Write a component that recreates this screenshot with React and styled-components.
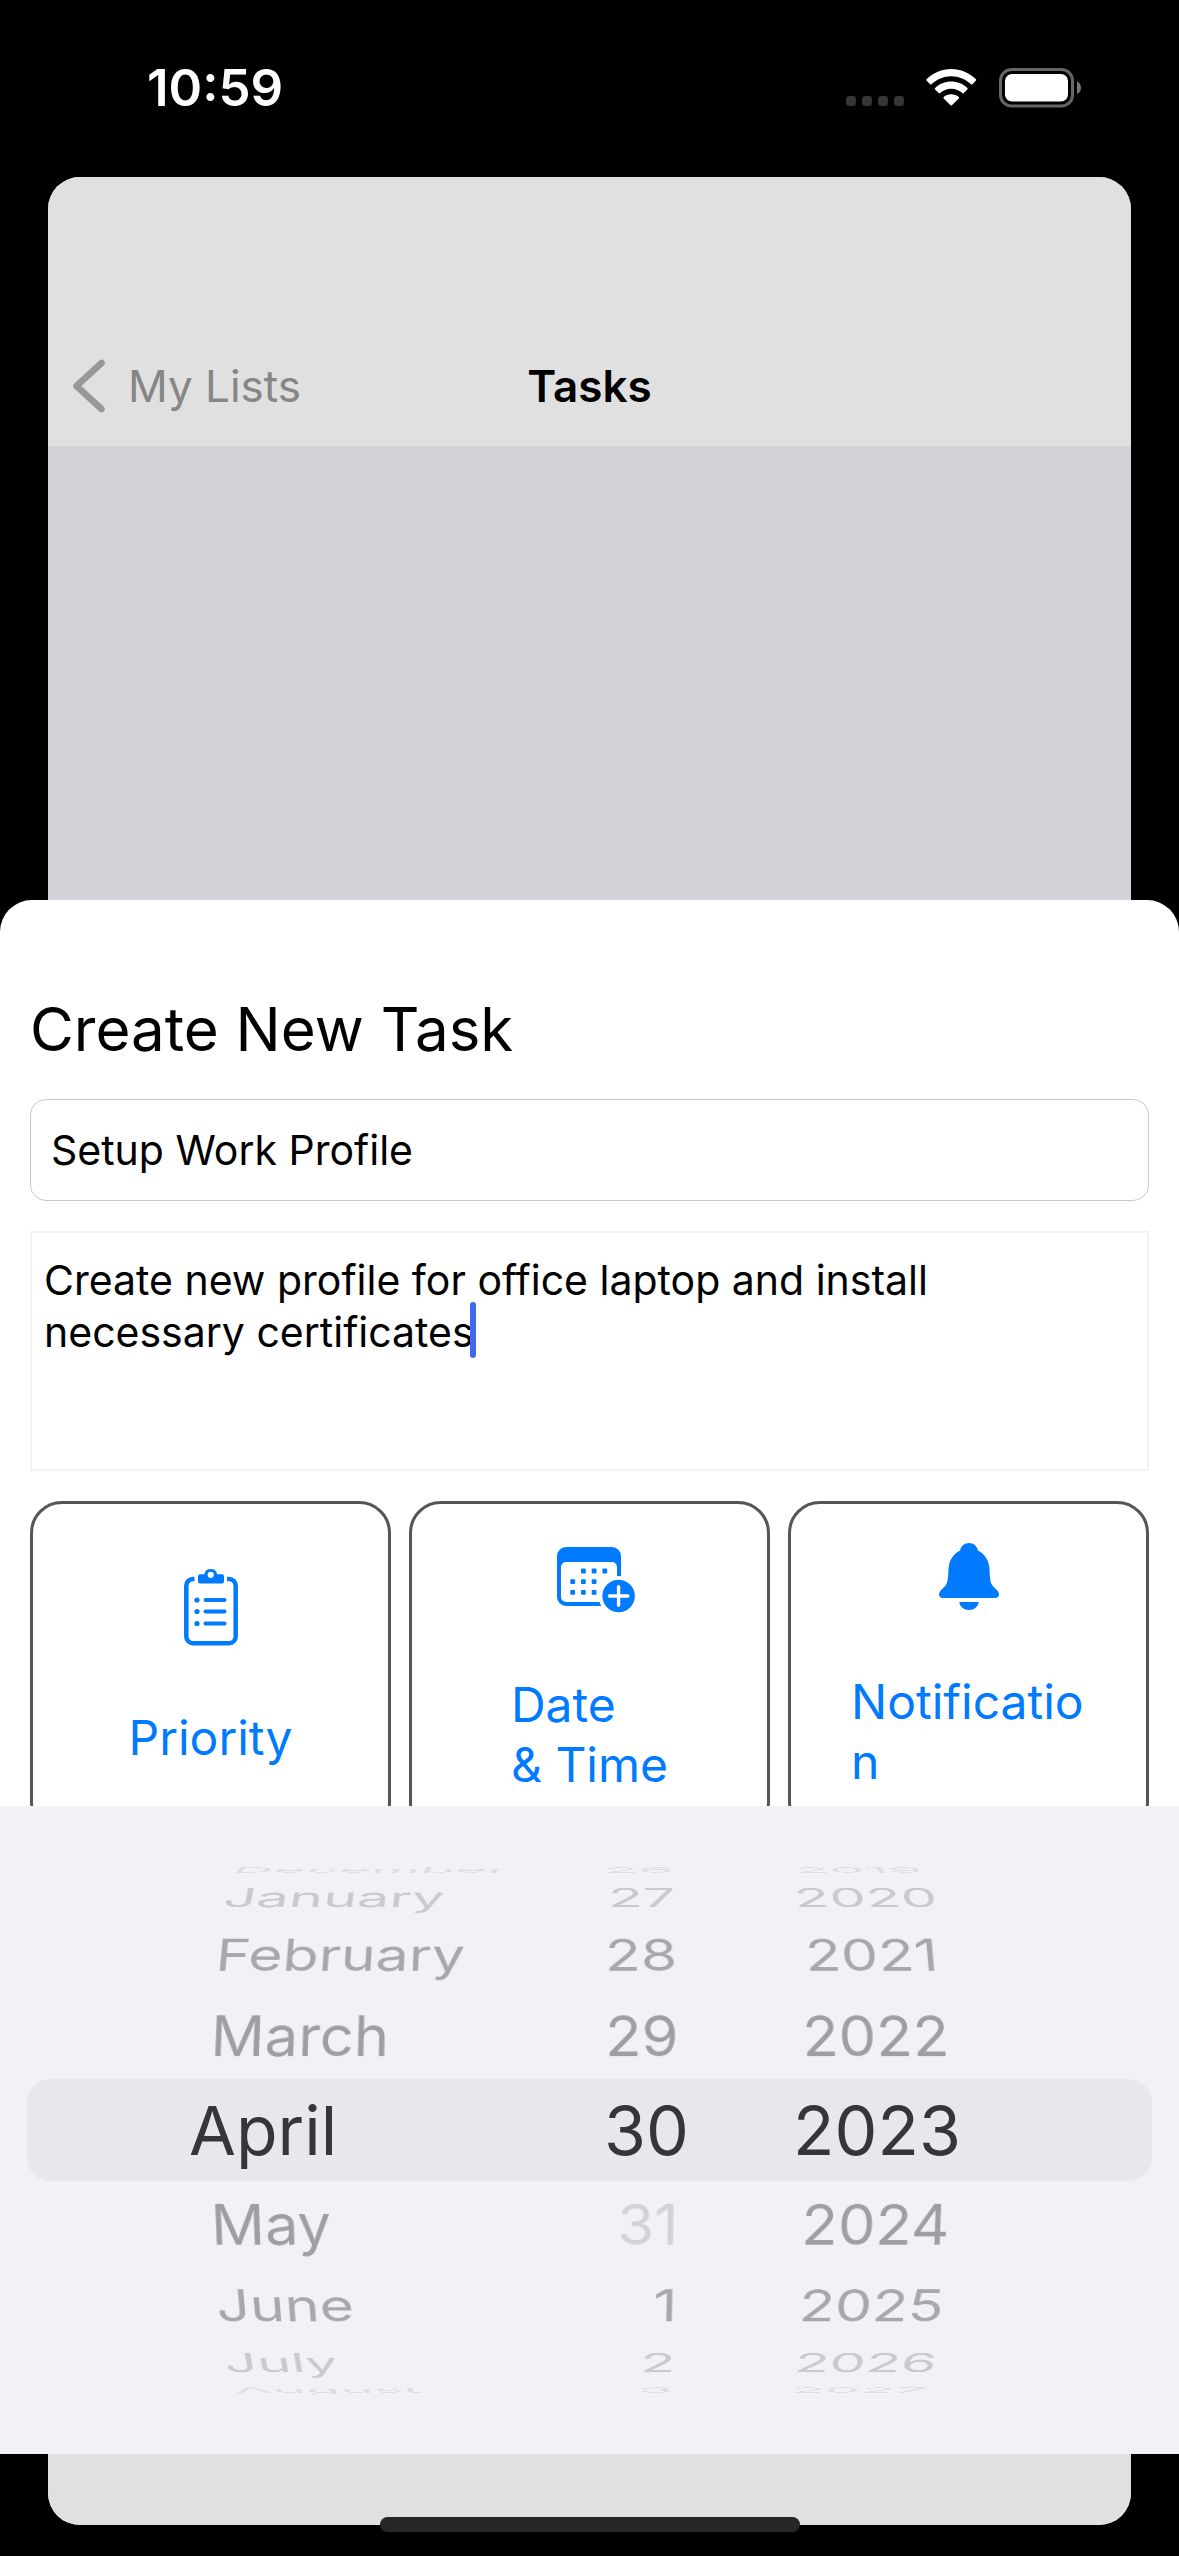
import React, { useState } from "react";
import styled, { createGlobalStyle } from "styled-components";

const GlobalStyle = createGlobalStyle`
  *, *::before, *::after { box-sizing: border-box; }
  body {
    margin: 0;
    background: #000;
    font-family: Inter, "Liberation Sans", sans-serif;
    color: #000;
  }
  button, input, textarea { font: inherit; color: inherit; margin: 0; }
`;

const BLUE = "#007aff";
const WHEEL_RADIUS = 284;
const WHEEL_STEP = 19.5;

const Screen = styled.div`
  position: relative;
  display: flex;
  flex-direction: column;
  min-height: 100vh;
  overflow: hidden;
`;

const StatusBar = styled.header`
  display: flex;
  align-items: center;
  justify-content: space-between;
  height: 177px;
  padding: 0 98px 2px 147px;
  color: #fff;
`;

const Clock = styled.time`
  font-size: 51px;
  font-weight: 600;
  line-height: 60px;
`;

const StatusIcons = styled.div`
  display: flex;
  align-items: center;
  gap: 22px;
`;

const Stage = styled.div`
  flex: 1;
  display: grid;
`;

const BackCard = styled.section`
  grid-area: 1 / 1;
  display: flex;
  flex-direction: column;
  margin: 0 48px 31px;
  border-radius: 32px;
  background: #d4d3d9;
  overflow: hidden;
`;

const NavBar = styled.nav`
  display: grid;
  grid-template-columns: 1fr auto 1fr;
  align-items: center;
  height: 269px;
  padding: 148px 24px 0;
  background: #e0e0e0;
`;

const BackLink = styled.a`
  display: flex;
  align-items: center;
  gap: 22px;
  color: #868686;
  font-size: 44px;
  line-height: 56px;
  text-decoration: none;
`;

const NavTitle = styled.h1`
  margin: 0;
  font-size: 44px;
  font-weight: 600;
  line-height: 56px;
`;

const TabBar = styled.div`
  height: 120px;
  margin-top: auto;
  background: #e0e0e0;
`;

const Overlay = styled.main`
  grid-area: 1 / 1;
  display: flex;
  flex-direction: column;
  margin: 723px 0 102px;
`;

const Sheet = styled.form`
  flex: 1;
  display: flex;
  flex-direction: column;
  gap: 30px;
  padding: 89px 30px 0;
  border-radius: 32px 32px 0 0;
  background: #fff;
`;

const SheetTitle = styled.h2`
  margin: 0;
  font-size: 60px;
  font-weight: 400;
  line-height: 80px;
`;

const TitleInput = styled.input`
  width: 100%;
  height: 102px;
  padding: 0 20px;
  border: 1px solid #c9c9cb;
  border-radius: 16px;
  background: #fff;
  font-size: 41px;
  outline: none;
`;

const NotesField = styled.div`
  position: relative;
  display: flex;
`;

const Notes = styled.textarea`
  width: 100%;
  height: 240px;
  padding: 21px 40px 21px 12px;
  border: 2px solid #f2f2f5;
  background: #fff;
  font-size: 41px;
  line-height: 52px;
  resize: none;
  outline: none;
  caret-color: #4169f0;
`;

const Caret = styled.span`
  position: absolute;
  left: 440px;
  top: 71px;
  width: 6px;
  height: 56px;
  border-radius: 3px;
  background: #4169f0;
`;

const Options = styled.div`
  display: grid;
  grid-template-columns: repeat(3, 1fr);
  gap: 18px;
  height: 305px;
  overflow: hidden;
`;

const OptionCard = styled.button`
  display: flex;
  flex-direction: column;
  align-items: center;
  justify-content: center;
  gap: 62px;
  height: 333px;
  padding: 0 60px;
  border: 3px solid #555;
  border-radius: 32px;
  background: #fff;
  color: ${BLUE};
  font-size: 48px;
  line-height: 60px;
`;

const OptionLabel = styled.span`
  max-width: 100%;
  text-align: left;
  white-space: pre-line;
  overflow-wrap: anywhere;
`;

const Picker = styled.section`
  display: grid;
  align-items: center;
  height: 648px;
  padding: 0 27px;
  background: #f2f1f7;
`;

const SelectionBand = styled.div`
  grid-area: 1 / 1;
  height: 102px;
  border-radius: 24px;
  background: #e8e7ec;
`;

const Drum = styled.div`
  grid-area: 1 / 1;
  display: grid;
  grid-template-columns: 500fr 162fr 376fr 87fr;
  perspective: 3300px;
`;

const Wheel = styled.ul`
  display: grid;
  margin: 0;
  padding: 0;
  list-style: none;
  transform-style: preserve-3d;
`;

const shade = ["#363638", "#9f9fa1", "#a8a8ab", "#cacace", "#dedee2"];

const WheelItem = styled.li`
  grid-area: 1 / 1;
  display: flex;
  justify-content: ${(p) => p.$align};
  align-items: center;
  height: 102px;
  padding-left: ${(p) => (p.$align !== "flex-start" ? 0 : p.$offset === 0 ? 162 : 182)}px;
  padding-right: ${(p) => (p.$align !== "flex-end" || p.$offset === 0 ? 0 : 10)}px;
  font-size: ${(p) => (p.$offset === 0 ? 68 : 60)}px;
  color: ${(p) => (p.$muted ? "#d3d3d5" : shade[Math.abs(p.$offset)])};
  transform: translateZ(-${WHEEL_RADIUS}px) rotateX(${(p) => -p.$offset * WHEEL_STEP}deg)
    translateZ(${WHEEL_RADIUS}px);
`;

const HomeIndicator = styled.div`
  position: absolute;
  bottom: 24px;
  left: 50%;
  width: 420px;
  height: 15px;
  margin-left: -210px;
  border-radius: 8px;
  background: #262626;
`;

const SignalDots = () => (
  <svg width="58" height="38" viewBox="0 0 58 38" fill="#363636" aria-hidden="true">
    {[0, 16, 32, 48].map((x) => (
      <rect key={x} x={x} y="27" width="10" height="10" rx="3.5" />
    ))}
  </svg>
);

const WifiIcon = () => (
  <svg width="51" height="37" viewBox="0 0 51 37" fill="#fff" aria-hidden="true">
    <path d="M.5 10.2C7 3.8 15.8 0 25.2 0S43.5 3.8 50 10.2c.4.4.4 1 0 1.4l-3.6 3.7c-.4.4-1 .4-1.4 0C39.8 10.3 32.8 7.3 25.2 7.3S10.7 10.3 5.5 15.3c-.4.4-1 .4-1.4 0L.5 11.6c-.4-.4-.4-1 0-1.4z" />
    <path d="M9.1 19C13.3 15 19 12.6 25.2 12.6S37.2 15 41.4 19c.4.4.4 1 0 1.4l-3.7 3.7c-.4.4-1 .4-1.4 0-2.9-2.7-6.8-4.3-11.1-4.3s-8.2 1.6-11.1 4.3c-.4.4-1 .4-1.4 0L9.1 20.4c-.4-.4-.4-1 0-1.4z" />
    <path d="M17.7 28c2-1.7 4.6-2.7 7.5-2.7s5.6 1 7.6 2.7c.4.4.5 1 0 1.4l-6.9 6.9c-.4.4-1 .4-1.4 0l-6.8-6.9c-.4-.4-.4-1 0-1.4z" />
  </svg>
);

const BatteryIcon = () => (
  <svg width="82" height="40" viewBox="0 0 82 40" aria-hidden="true">
    <rect x="1.5" y="1.5" width="72" height="36.5" rx="11" fill="none" stroke="#666" strokeWidth="3" />
    <rect x="6" y="6" width="63" height="27.5" rx="7" fill="#fff" />
    <path d="M78 13.5c2.6 1 4 3.5 4 6.2s-1.4 5.2-4 6.2z" fill="#777" />
  </svg>
);

const BackChevron = () => (
  <svg width="34" height="54" viewBox="0 0 34 54" fill="none" aria-hidden="true">
    <path d="M29.5 4 4.5 27l25 23" stroke="#989898" strokeWidth="6.5" strokeLinecap="round" strokeLinejoin="round" />
  </svg>
);

const ClipboardIcon = () => (
  <svg width="54" height="78" viewBox="0 0 54 78" fill={BLUE} aria-hidden="true">
    <path
      d="M10.5 11H9a6.7 6.7 0 0 0-6.7 6.7v50.8A6.7 6.7 0 0 0 9 75.2h36a6.7 6.7 0 0 0 6.7-6.7V17.7A6.7 6.7 0 0 0 45 11h-2"
      fill="none"
      stroke={BLUE}
      strokeWidth="4.5"
    />
    <path
      fillRule="evenodd"
      d="M16 6.3h4.3a6.5 6.5 0 0 1 12.8 0H38a2 2 0 0 1 2 2v5.2a2 2 0 0 1-2 2H16a2 2 0 0 1-2-2V8.3a2 2 0 0 1 2-2zM26.7 3.7a3.1 3.1 0 1 0 0 6.2 3.1 3.1 0 0 0 0-6.2z"
    />
    {[32, 43.5, 55.5].map((y) => (
      <g key={y}>
        <circle cx="13" cy={y} r="2.6" />
        <rect x="19.5" y={y - 2} width="23" height="4" rx="2" />
      </g>
    ))}
  </svg>
);

const calendarDots = [
  [26.4, 24], [37.1, 24], [47.8, 24],
  [15.7, 34.7], [26.4, 34.7], [37.1, 34.7],
  [15.7, 45.4], [26.4, 45.4], [37.1, 45.4],
];

const CalendarIcon = () => (
  <svg width="90" height="72" viewBox="-12 -6 90 72" fill={BLUE} aria-hidden="true">
    <path
      fillRule="evenodd"
      d="M9 0h46a9 9 0 0 1 9 9v41a9 9 0 0 1-9 9H9a9 9 0 0 1-9-9V9a9 9 0 0 1 9-9zM9 15a5 5 0 0 0-5 5v30a5 5 0 0 0 5 5h46a5 5 0 0 0 5-5V20a5 5 0 0 0-5-5z"
    />
    <circle cx="61.6" cy="49" r="20" fill="#fff" />
    {calendarDots.map(([x, y]) => (
      <rect key={`${x}-${y}`} x={x - 2.4} y={y - 2.4} width="4.8" height="4.8" rx="1" />
    ))}
    <circle cx="61.6" cy="49" r="16.2" />
    <path d="M61.6 39.8v18.4M52.4 49h18.4" stroke="#fff" strokeWidth="3.4" strokeLinecap="round" />
  </svg>
);

const BellIcon = () => (
  <svg width="60" height="67" viewBox="0 0 60 67" fill={BLUE} aria-hidden="true">
    <path d="M30 0c4.6 0 8 3 9 7.5 7 3.5 11 10 11.500 18.500.3 7 .5 11.500 2 15 1.500 3.500 7.500 6 7.500 10.800 0 2-1.500 3.200-3.800 3.200H3.800C1.500 55 0 53.800 0 51.800 0 47 6 44.500 7.500 41c1.500-3.500 1.700-8 2-15C10 17.500 14 11 21 7.500 22 3 25.400 0 30 0z" />
    <path d="M20.3 59h19.4c-.4 4.6-4.7 8-9.7 8s-9.3-3.4-9.7-8z" />
  </svg>
);

const options = [
  { label: "Priority", Icon: ClipboardIcon },
  { label: "Date\n& Time", Icon: CalendarIcon },
  { label: "Notification", Icon: BellIcon },
];

const wheels = [
  {
    name: "Month",
    align: "flex-start",
    values: ["December", "January", "February", "March", "April", "May", "June", "July", "August"],
  },
  {
    name: "Day",
    align: "flex-end",
    values: ["26", "27", "28", "29", "30", "31", "1", "2", "3"],
    unavailable: "31",
  },
  {
    name: "Year",
    align: "center",
    values: ["2019", "2020", "2021", "2022", "2023", "2024", "2025", "2026", "2027"],
  },
];

export default function App() {
  const [title, setTitle] = useState("Setup Work Profile");
  const [notes, setNotes] = useState(
    "Create new profile for office laptop and install necessary certificates"
  );

  return (
    <Screen>
      <GlobalStyle />
      <StatusBar>
        <Clock>10:59</Clock>
        <StatusIcons>
          <SignalDots />
          <WifiIcon />
          <BatteryIcon />
        </StatusIcons>
      </StatusBar>
      <Stage>
        <BackCard>
          <NavBar>
            <BackLink href="#lists">
              <BackChevron />
              My Lists
            </BackLink>
            <NavTitle>Tasks</NavTitle>
          </NavBar>
          <TabBar />
        </BackCard>
        <Overlay>
          <Sheet onSubmit={(e) => e.preventDefault()}>
            <SheetTitle>Create New Task</SheetTitle>
            <TitleInput
              aria-label="Task title"
              value={title}
              onChange={(e) => setTitle(e.target.value)}
            />
            <NotesField>
              <Notes
                aria-label="Task description"
                value={notes}
                onChange={(e) => setNotes(e.target.value)}
              />
              <Caret />
            </NotesField>
            <Options>
              {options.map(({ label, Icon }) => (
                <OptionCard key={label} type="button">
                  <Icon />
                  <OptionLabel>{label}</OptionLabel>
                </OptionCard>
              ))}
            </Options>
          </Sheet>
          <Picker aria-label="Date">
            <SelectionBand />
            <Drum>
              {wheels.map(({ name, align, values, unavailable }) => (
                <Wheel key={name} role="listbox" aria-label={name}>
                  {values.map((value, i) => (
                    <WheelItem
                      key={value}
                      role="option"
                      aria-selected={i === 4}
                      $offset={i - 4}
                      $align={align}
                      $muted={value === unavailable}
                    >
                      {value}
                    </WheelItem>
                  ))}
                </Wheel>
              ))}
            </Drum>
          </Picker>
        </Overlay>
      </Stage>
      <HomeIndicator />
    </Screen>
  );
}
